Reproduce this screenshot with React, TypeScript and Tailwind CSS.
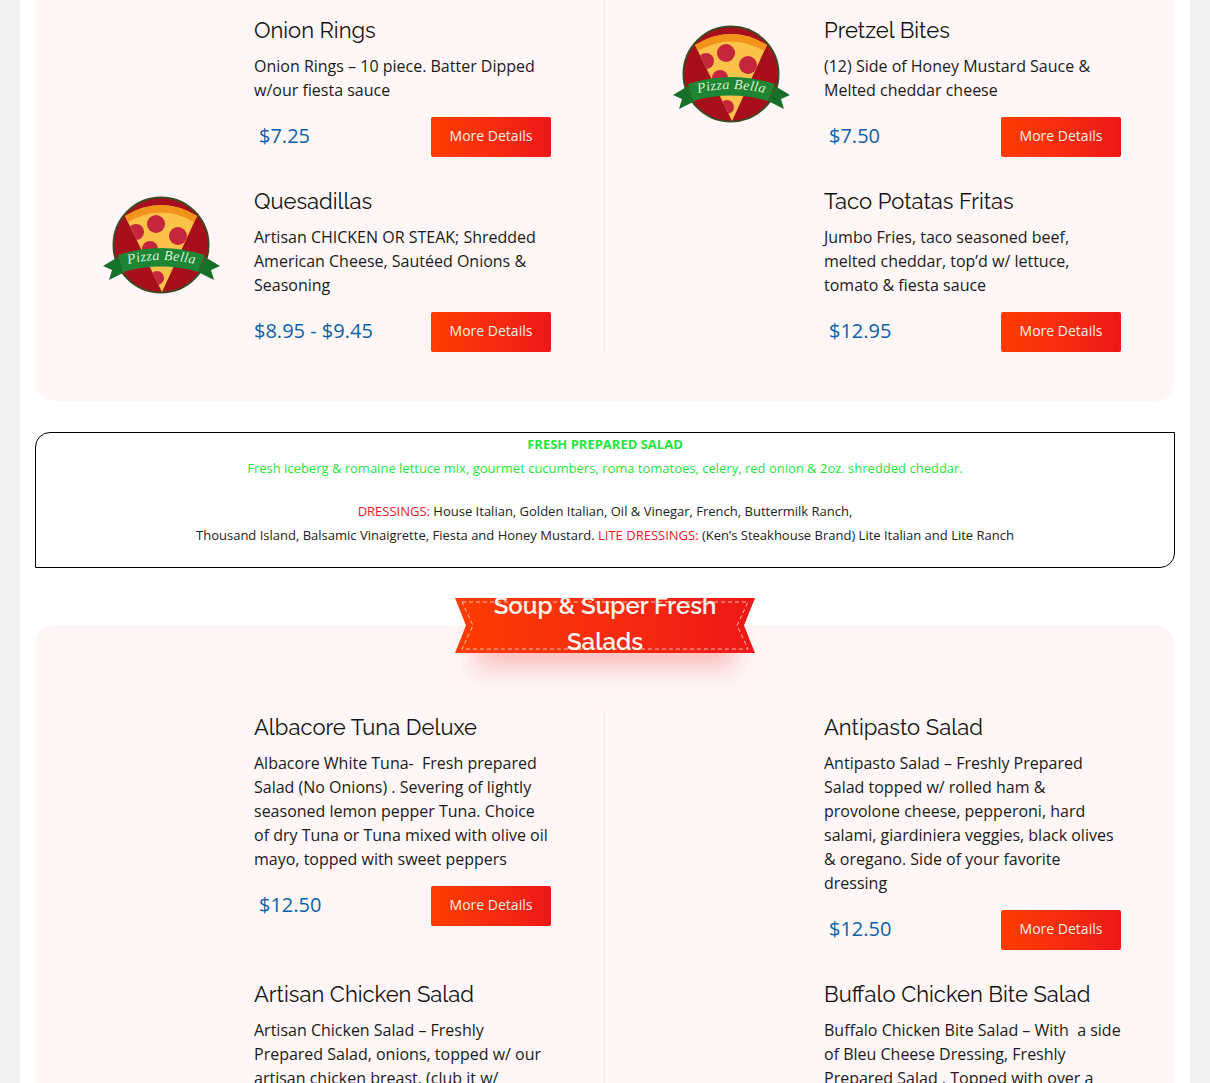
const Logo = () => (
  <svg viewBox="0 0 117 100" className="w-[117px] h-[100px]">
    <defs>
      <clipPath id="slice">
        <path d="M22 21 Q58 -1 94 21 L59 97 Z" />
      </clipPath>
    </defs>
    <circle cx="58" cy="50" r="47.5" fill="#a80f1c" stroke="#3c4a22" strokeWidth="2" />
    <path d="M22 21 Q58 -1 94 21 L59 97 Z" fill="#fcc24a" />
    <path d="M22 21 Q58 -1 94 21 L91 27 Q58 8 25 27 Z" fill="#f2931c" />
    <g clipPath="url(#slice)" fill="#c4263c">
      <circle cx="53" cy="29" r="9" />
      <circle cx="75" cy="41" r="9" />
      <circle cx="33" cy="37" r="8" />
      <circle cx="47" cy="54" r="8" />
      <circle cx="54" cy="83" r="7" />
    </g>
    <path d="M15 62 L0 71 L9 75 L6 85 L22 77 Z" fill="#17702a" />
    <path d="M102 62 L117 71 L108 75 L111 85 L95 77 Z" fill="#17702a" />
    <path d="M15 60 Q58 46 102 60 L95 77 Q58 66 20 77 Z" fill="#1d8534" />
    <path id="ribbon-line" d="M15 72 Q58 58 102 72" fill="none" />
    <text fontSize="14" fontStyle="italic" letterSpacing="0.4" fill="#dcefcf" textAnchor="middle" style={{ fontFamily: '"Liberation Serif", serif' }}>
      <textPath href="#ribbon-line" startOffset="50%">
        Pizza Bella
      </textPath>
    </text>
  </svg>
);

type Item = {
  title: string;
  desc: string;
  price: string;
  logo?: boolean;
  wide?: boolean;
};

const MenuItem = ({ item }: { item: Item }) => (
  <div className="flex pl-[34px]">
    <div className="w-[185px] shrink-0 pt-[10px] flex justify-center items-start">
      {item.logo && <Logo />}
    </div>
    <div className="w-[297px]">
      <h3 className="text-[22px] leading-[32px] mb-[8px] text-[#111] font-['Raleway','Lato',sans-serif]">{item.title}</h3>
      <p className="text-[16px] leading-[24px] text-[#1a1a1a]">{item.desc}</p>
      <div className="flex items-center justify-between mt-[15px]">
        <span className={`text-[20px] leading-[28px] -mt-[2px] text-[#0d5fa8] ${item.wide ? "" : "ml-[5px]"}`}>{item.price}</span>
        <button className="w-[120px] h-[40px] pb-[3px] rounded-[2px] text-[14px] text-[#ffeee6] bg-gradient-to-r from-[#ff3c00] to-[#ed1717]">
          More Details
        </button>
      </div>
    </div>
  </div>
);

const Row = ({ left, right, first, last }: { left: Item; right: Item; first?: boolean; last?: boolean }) => {
  const cell = `${first ? "pt-[14px] " : ""}${last ? "" : "pb-[28px]"}`;
  return (
    <div className="grid grid-cols-2">
      <div className={`border-r border-[#f3e8e8] ${cell}`}>
        <MenuItem item={left} />
      </div>
      <div className={cell}>
        <MenuItem item={right} />
      </div>
    </div>
  );
};

export default function App() {
  return (
    <div className="bg-[#f1f1f1] h-[1083px] overflow-hidden font-['Open_Sans',sans-serif]">
      <div className="mx-[20px] bg-white h-full px-[15px]">
        {/* Top panel, page is scrolled so it starts above the fold */}
        <div className="bg-[#fff7f7] rounded-b-[20px] pb-[49px]">
          <Row
            first
            left={{ title: "Onion Rings", desc: "Onion Rings – 10 piece. Batter Dipped w/our fiesta sauce", price: "$7.25" }}
            right={{ title: "Pretzel Bites", desc: "(12) Side of Honey Mustard Sauce & Melted cheddar cheese", price: "$7.50", logo: true }}
          />
          <Row
            last
            left={{ title: "Quesadillas", desc: "Artisan CHICKEN OR STEAK; Shredded American Cheese, Sautéed Onions & Seasoning", price: "$8.95 - $9.45", logo: true, wide: true }}
            right={{ title: "Taco Potatas Fritas", desc: "Jumbo Fries, taco seasoned beef, melted cheddar, top’d w/ lettuce, tomato & fiesta sauce", price: "$12.95" }}
          />
        </div>

        {/* Dressing notes */}
        <div className="mt-[31px] h-[136px] border border-black rounded-tl-[15px] rounded-br-[15px] text-center text-[13px] leading-[24px] text-[#222]">
          <p className="text-[#1fe63c] mb-[19px] -mt-px">
            <strong className="block">FRESH PREPARED SALAD</strong>
            Fresh iceberg &amp; romaine lettuce mix, gourmet cucumbers, roma tomatoes, celery, red onion &amp; 2oz. shredded cheddar.
          </p>
          <p>
            <span className="text-[#e61c24]">DRESSINGS:</span> House Italian, Golden Italian, Oil &amp; Vinegar, French, Buttermilk Ranch,
            <br />
            Thousand Island, Balsamic Vinaigrette, Fiesta and Honey Mustard. <span className="text-[#e61c24]">LITE DRESSINGS:</span> (Ken’s Steakhouse Brand) Lite Italian and Lite Ranch
          </p>
        </div>

        {/* Ribbon heading */}
        <div className="relative z-10 mx-auto mt-[30px] -mb-[28px] w-[300px] h-[55px]">
          <div className="absolute left-[20px] right-[20px] top-[10px] h-[45px] shadow-[0_15px_25px_0_rgba(237,23,23,0.25)]" />
          <div className="absolute inset-0 bg-gradient-to-r from-[#ff3c00] to-[#ed1717] [clip-path:polygon(0_0,100%_0,289px_50%,100%_100%,0_100%,11px_50%)]" />
          <svg viewBox="0 0 300 55" className="absolute inset-0 w-[300px] h-[55px]" fill="none" stroke="#ffe9e0" strokeWidth="0.8" strokeDasharray="4 3">
            <path d="M7 4 H293 L282 27.5 L293 51 H7 L18 27.5 Z" />
          </svg>
          <h2 className="absolute left-0 right-0 -top-[10px] text-center text-[24px] leading-[36px] font-semibold text-[#fff4ee] font-['Raleway','Lato',sans-serif]">
            Soup &amp; Super Fresh
            <br />
            Salads
          </h2>
        </div>

        {/* Salads panel */}
        <div className="bg-[#fff7f7] rounded-t-[20px] pt-[86px]">
          <Row
            left={{ title: "Albacore Tuna Deluxe", desc: "Albacore White Tuna-\u00a0 Fresh prepared Salad (No Onions) . Severing of lightly seasoned lemon pepper Tuna. Choice of dry Tuna or Tuna mixed with olive oil mayo, topped with sweet peppers", price: "$12.50" }}
            right={{ title: "Antipasto Salad", desc: "Antipasto Salad – Freshly Prepared Salad topped w/ rolled ham & provolone cheese, pepperoni, hard salami, giardiniera veggies, black olives & oregano. Side of your favorite dressing", price: "$12.50" }}
          />
          <Row
            left={{ title: "Artisan Chicken Salad", desc: "Artisan Chicken Salad – Freshly Prepared Salad, onions, topped w/ our artisan chicken breast. (club it w/ bacon, add avocado)", price: "$12.50" }}
            right={{ title: "Buffalo Chicken Bite Salad", desc: "Buffalo Chicken Bite Salad – With\u00a0 a side of Bleu Cheese Dressing, Freshly Prepared Salad . Topped with over a dozen bites", price: "$12.50" }}
          />
        </div>
      </div>
    </div>
  );
}
